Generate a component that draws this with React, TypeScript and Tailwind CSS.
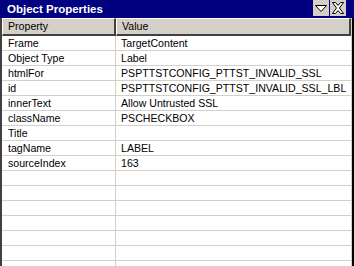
import React from "react";

const rows: [string, string][] = [
  ["Frame", "TargetContent"],
  ["Object Type", "Label"],
  ["htmlFor", "PSPTTSTCONFIG_PTTST_INVALID_SSL"],
  ["id", "PSPTTSTCONFIG_PTTST_INVALID_SSL_LBL"],
  ["innerText", "Allow Untrusted SSL"],
  ["className", "PSCHECKBOX"],
  ["Title", ""],
  ["tagName", "LABEL"],
  ["sourceIndex", "163"],
  ["", ""],
  ["", ""],
  ["", ""],
  ["", ""],
  ["", ""],
  ["", ""],
  ["", ""],
];

export default function App() {
  return (
    <div
      className="w-[354px] h-[266px] overflow-hidden bg-white flex flex-col text-black"
      style={{ fontFamily: '"Liberation Sans", Arial, sans-serif' }}
    >
      <div className="h-[18px] bg-[#000080] flex items-start shrink-0">
        <div className="pl-[7px] pt-[2px] text-white font-bold text-[11.5px] leading-[14px] flex-1">
          Object Properties
        </div>
        <div className="w-[16px] h-[16px] bg-[#d4d0c8] flex items-center justify-center ml-0">
          <svg width="14" height="10" viewBox="0 0 14 10">
            <path d="M1.5 2.5 L12.5 2.5 L7 8.5 Z" fill="white" stroke="black" strokeWidth="1" />
          </svg>
        </div>
        <div className="w-[1px]" />
        <div className="w-[16px] h-[16px] bg-[#d4d0c8] flex items-center justify-center">
          <svg width="14" height="14" viewBox="0 0 14 14">
            <path
              d="M1.5 1.5 L4.5 1.5 L7 4.5 L9.5 1.5 L12.5 1.5 L8.5 7 L12.5 12.5 L9.5 12.5 L7 9.5 L4.5 12.5 L1.5 12.5 L5.5 7 Z"
              fill="white"
              stroke="black"
              strokeWidth="1"
            />
          </svg>
        </div>
        <div className="w-[8px]" />
      </div>
      <div className="flex-1 flex border-l-2 border-l-[#404040] border-r-2 border-r-black">
        <div className="flex-1 flex flex-col border-r border-r-[#d4d0c8]">
          <div className="h-[18px] flex shrink-0 text-[10.6px]">
            <div className="w-[114px] bg-[#d4d0c8] border-t border-l border-t-white border-l-white border-b-2 border-r-2 border-b-[#404040] border-r-[#404040] pl-[5px] flex items-center">
              Property
            </div>
            <div className="flex-1 bg-[#d4d0c8] border-t border-l border-t-white border-l-white border-b-2 border-r-2 border-b-[#404040] border-r-[#404040] pl-[5px] flex items-center">
              Value
            </div>
          </div>
          {rows.map(([k, v], i) => (
            <div key={i} className="h-[15px] shrink-0 flex border-b border-b-[#d4d0c8] text-[10.6px] leading-[14px]">
              <div className="w-[114px] pl-[6px] border-r border-r-[#d4d0c8] whitespace-nowrap">{k}</div>
              <div className="flex-1 pl-[5px] whitespace-nowrap">{v}</div>
            </div>
          ))}
        </div>
      </div>
    </div>
  );
}
